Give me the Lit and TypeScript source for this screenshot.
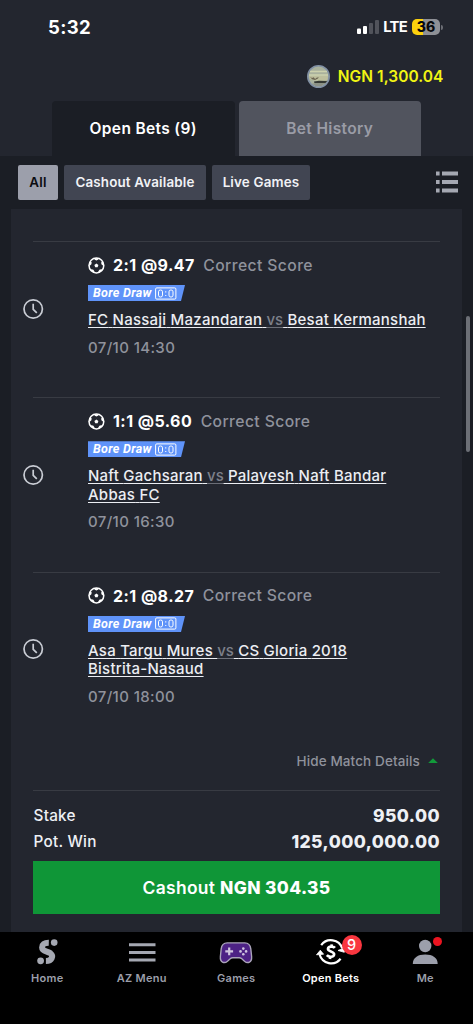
import { LitElement, html, css, svg } from 'lit';
import { customElement, property } from 'lit/decorators.js';

interface Bet {
  pick: string;
  home: string;
  away: string;
  date: string;
}

const BETS: Bet[] = [
  { pick: '2:1 @9.47', home: 'FC Nassaji Mazandaran', away: 'Besat Kermanshah', date: '07/10 14:30' },
  { pick: '1:1 @5.60', home: 'Naft Gachsaran', away: 'Palayesh Naft Bandar Abbas FC', date: '07/10 16:30' },
  { pick: '2:1 @8.27', home: 'Asa Targu Mures', away: 'CS Gloria 2018 Bistrita-Nasaud', date: '07/10 18:00' },
];

const seams = [0, 72, 144, 216, 288];

// Hyphenated club names stay on one line.
const words = (name: string) =>
  name.split(' ').map((w, i) => html`${i ? ' ' : ''}${w.includes('-') ? html`<span class="word">${w}</span>` : w}`);

@customElement('bet-item')
export class BetItem extends LitElement {
  @property({ attribute: false }) bet!: Bet;

  static styles = css`
    :host { display: flex; border-top: 1px solid #383b43; }
    .clock { display: flex; align-items: center; width: 55px; padding-bottom: 21px; box-sizing: border-box; }
    .clock svg { display: block; margin-left: -11px; }
    .body { flex: 1; min-width: 0; padding: 11px 0 39.7px; }
    .title { display: flex; align-items: center; height: 24px; white-space: nowrap; }
    .ball { display: block; margin-right: 8px; }
    .pick { font-size: 16px; font-weight: 750; color: #fff; letter-spacing: 0.45px; }
    .market { font-size: 15.7px; font-weight: 500; color: #8f929c; margin-left: 8.5px; letter-spacing: 0.4px; }
    .tag {
      display: flex; align-items: center; width: 97px; height: 16px; margin-top: 8px; padding-left: 5px;
      box-sizing: border-box; background: #5f93f9; color: #fff; letter-spacing: 0.3px;
      clip-path: polygon(0 0, 100% 0, calc(100% - 4px) 100%, 0 100%);
      font: italic 700 12.5px/16px Roboto, sans-serif;
    }
    .tag svg { display: block; margin-left: 3px; }
    .teams {
      margin-top: 10px; max-width: 340px; font-size: 15px; line-height: 18.5px; font-weight: 500; color: #eceef3;
      text-decoration: underline; text-decoration-thickness: 1.3px; text-underline-offset: 1.8px;
      text-decoration-skip-ink: none; letter-spacing: 0.24px;
    }
    .word { white-space: nowrap; }
    .vs {
      color: #7d808a; letter-spacing: 0; text-decoration: underline #6b6e77; text-decoration-thickness: 1.3px;
      text-underline-offset: 1.8px; text-decoration-skip-ink: none;
    }
    .date { margin-top: 8px; font-size: 15px; line-height: 20px; font-weight: 500; color: #8f929c; letter-spacing: 0.37px; }
  `;

  render() {
    const b = this.bet;
    return html`
      <div class="clock">
        <svg width="22" height="22" viewBox="0 0 22 22" fill="none" stroke="#c9ccd4" stroke-width="1.7">
          <circle cx="11.2" cy="11" r="9.2" />
          <path d="M11.2 5.8V11.3L14.8 14.9" />
        </svg>
      </div>
      <div class="body">
        <div class="title">
          <svg class="ball" width="17" height="17" viewBox="0 0 17 17">
            <circle cx="8.4" cy="8.5" r="7.4" fill="none" stroke="#fff" stroke-width="1.5" />
            <path d="M8.4 6.4L10.4 7.9L9.6 10.2H7.2L6.4 7.9Z" fill="#fff" />
            ${seams.map((a) => svg`<path transform="rotate(${a} 8.4 8.5)" d="M5.8 1.2H11L10 2.7L8.4 3.4L6.8 2.7Z" fill="#fff" />`)}
          </svg>
          <span class="pick">${b.pick}</span><span class="market">Correct Score</span>
        </div>
        <div class="tag">Bore Draw
          <svg width="22" height="13" viewBox="0 0 22 13">
            <rect x="0.6" y="0.9" width="20.3" height="11.2" rx="1.2" fill="none" stroke="#fff" />
            <g fill="none" stroke="#fff">
              <rect x="3.5" y="3" width="4" height="7" rx="1.8" />
              <rect x="14" y="3" width="4" height="7" rx="1.8" />
            </g>
            <path d="M10.2 4.3h1.1v1.1h-1.1zM10.2 8h1.1v1.1h-1.1z" fill="#fff" />
          </svg>
        </div>
        <div class="teams">${words(b.home)} <span class="vs">vs</span> ${words(b.away)}</div>
        <div class="date">${b.date}</div>
      </div>
    `;
  }
}

@customElement('app-root')
export class AppRoot extends LitElement {
  static styles = css`
    :host {
      display: flex; flex-direction: column; position: relative; width: 473px; height: 1024px; overflow: hidden;
      background: #1b1e25; color: #fff; font-family: Inter, sans-serif; box-sizing: border-box;
    }
    svg { display: block; flex: none; }
    header { background: #23262f; height: 156px; display: flex; flex-direction: column; flex: none; }
    .status { display: flex; align-items: center; justify-content: space-between; height: 54px; padding: 0 30px 0 48px; }
    .time { font-size: 18.5px; font-weight: 700; letter-spacing: 0.35px; }
    .signals { display: flex; align-items: center; }
    .lte { font-size: 14.8px; font-weight: 650; margin: 0 5px 0 4px; letter-spacing: -0.7px; }
    .battery {
      width: 28px; height: 16px; border-radius: 5px; display: flex; align-items: center; justify-content: center;
      background: linear-gradient(90deg, #fdd20d 0 10.5px, #8e9096 10.5px); color: #08090c;
      font-size: 14px; font-weight: 800; line-height: 16px;
    }
    .cap { width: 2px; height: 5px; margin-left: 1px; background: #6b6d74; border-radius: 0 2px 2px 0; }
    .balance { display: flex; align-items: center; justify-content: flex-end; height: 44px; padding-right: 29.5px; gap: 7.5px; }
    .amount { color: #f1f514; font-size: 15.5px; font-weight: 600; letter-spacing: 0.05px; }
    .tabs { display: flex; gap: 4px; padding-left: 52px; margin-top: 3px; }
    .tab {
      width: 182.5px; height: 55px; display: flex; align-items: center; justify-content: center;
      border-radius: 4px 4px 0 0; font-size: 15.5px; font-weight: 600; background: #1b1e25; letter-spacing: 0.35px;
    }
    .tab.off { background: #51545e; color: #9a9ca6; }
    .filters { display: flex; align-items: center; height: 53px; gap: 6px; padding: 0 15px 0 18px; flex: none; }
    .chip {
      height: 35px; border-radius: 2px; background: #414552; color: #f1f2f6; display: flex; align-items: center;
      justify-content: center; font-size: 13.4px; font-weight: 600; white-space: nowrap; letter-spacing: 0.17px;
      padding-bottom: 1px; box-sizing: border-box;
    }
    .chip.all { width: 40px; background: #9c9fab; color: #0c0d11; }
    .chip.cash { width: 142px; }
    .chip.live { width: 98px; }
    .list { margin: -2px 0 0 auto; }
    main { flex: 1; margin: 0 11px; padding: 32px 22px 0; background: #23262f; min-height: 0; }
    .hide {
      display: flex; align-items: center; justify-content: flex-end; height: 20px; margin: 4px 0 19px; padding-right: 2px;
      color: #8f929c; font-size: 13.5px; font-weight: 500; gap: 8px; letter-spacing: 0.12px;
    }
    .sum { border-top: 1px solid #383b43; padding-top: 12px; }
    .row {
      display: flex; align-items: center; justify-content: space-between; height: 26px; padding-left: 0.5px;
      font-size: 15.3px; font-weight: 500; color: #eef0f5; letter-spacing: 0.25px;
    }
    .row b { font-size: 17.5px; font-weight: 800; letter-spacing: 0.43px; }
    .cashout {
      display: flex; align-items: center; justify-content: center; height: 53px; margin-top: 6.5px; background: #0f9637;
      font-size: 17.4px; font-weight: 600; white-space: pre; letter-spacing: 0.35px;
    }
    .cashout b { font-weight: 800; }
    nav { display: grid; grid-template-columns: repeat(5, 94.5px); height: 92px; background: #000; flex: none; }
    .item {
      position: relative; display: flex; flex-direction: column; align-items: center; padding-top: 5px;
      font-size: 11px; font-weight: 600; color: #9c9fab; line-height: 14px; letter-spacing: 0.25px;
    }
    .item svg { margin-bottom: 4px; }
    .item.on { color: #fff; }
    .badge {
      position: absolute; left: 58px; top: 3px; width: 20px; height: 20px; border-radius: 50%; background: #f9363f;
      color: #fff; font-size: 14.5px; font-weight: 500; line-height: 20px; text-align: center; letter-spacing: 0;
    }
    .dot { position: absolute; left: 54.5px; top: 4.5px; width: 9px; height: 9px; border-radius: 50%; background: #eb1420; }
    .scroll { position: absolute; left: 466px; top: 316px; width: 4px; height: 136px; border-radius: 2px; background: #6c6f76; }
  `;

  render() {
    return html`
      <header>
        <div class="status">
          <span class="time">5:32</span>
          <div class="signals">
            <svg width="22" height="14" viewBox="0 0 22 14">
              <rect x="0" y="8.5" width="4" height="5.5" rx="1" fill="#fff" />
              <rect x="6" y="6" width="4" height="8" rx="1" fill="#fff" />
              <rect x="12" y="3" width="4" height="11" rx="1" fill="#51535b" />
              <rect x="18" y="0" width="4" height="14" rx="1" fill="#51535b" />
            </svg>
            <span class="lte">LTE</span>
            <span class="battery">36</span><span class="cap"></span>
          </div>
        </div>
        <div class="balance">
          <svg width="23" height="23" viewBox="0 0 23 23">
            <circle cx="11.5" cy="11.5" r="10.7" fill="#a9b19d" stroke="#8190a4" stroke-width="1.6" />
            <path d="M2 10.5H21L20.5 14.5L17.5 16.5L7 15.5L2.5 13.5Z" fill="#bdbf9d" />
            <path d="M3 6.5H20M2 10H21" stroke="#cdd2ae" stroke-width="1.4" />
            <path d="M3 11.8L5 13L6.8 12.2L8 14L10 12.4L12 12.4L10.5 13.8L8 15L5 14.2Z" fill="#6b6350" />
            <path d="M7 16.4L12 15.8L20.2 16.1L18.3 18.2H7.5Z" fill="#343833" />
            <path d="M5 18.6H18L14.5 21H8.5Z" fill="#8c9187" />
          </svg>
          <span class="amount">NGN 1,300.04</span>
        </div>
        <div class="tabs">
          <div class="tab">Open Bets (9)</div>
          <div class="tab off">Bet History</div>
        </div>
      </header>
      <div class="filters">
        <div class="chip all">All</div>
        <div class="chip cash">Cashout Available</div>
        <div class="chip live">Live Games</div>
        <svg class="list" width="22" height="22" viewBox="0 0 22 22" fill="#a5a8b2">
          <path d="M0 0.5h3.6v4H0zM6 0.5h16v4H6zM0 9h3.6v4H0zM6 9h16v4H6zM0 17.5h3.6v4H0zM6 17.5h16v4H6z" />
        </svg>
      </div>
      <main>
        ${BETS.map((b) => html`<bet-item .bet=${b}></bet-item>`)}
        <div class="hide">
          Hide Match Details
          <svg width="10" height="5" viewBox="0 0 10 5"><path d="M0.2 5L5 0.3L9.8 5Z" fill="#129a3a" /></svg>
        </div>
        <div class="sum">
          <div class="row"><span>Stake</span><b>950.00</b></div>
          <div class="row"><span>Pot. Win</span><b>125,000,000.00</b></div>
        </div>
        <div class="cashout">Cashout <b>NGN 304.35</b></div>
      </main>
      <nav>
        <div class="item">
          <svg width="30" height="30" viewBox="0 0 30 30" fill="#a5a8b2">
            <path d="M16.8 5.7C12.4 5.6 10.1 7.6 10.1 10.4C10.1 14.6 15.6 14 18.4 16.2C21.8 19 20 24 13.9 24" fill="none" stroke="#a5a8b2" stroke-width="6" />
            <circle cx="22.2" cy="5.6" r="3.3" /><circle cx="8.6" cy="23.8" r="3.4" />
          </svg>Home
        </div>
        <div class="item">
          <svg width="30" height="30" viewBox="0 0 30 30" fill="#a5a8b2">
            <path d="M2 6.3h26.5v3H2zM2 14h26.5v3H2zM2 21.6h26.5v3H2z" />
          </svg>AZ Menu
        </div>
        <div class="item">
          <svg width="34" height="30" viewBox="0 0 34 30">
            <path d="M8.2 5.9H25.8C29.5 5.9 31.3 8.1 31.8 11.8L32.6 19.5C33.1 25.3 28.8 27 25.5 24.2L22.5 21.5C21.8 20.9 21.2 20.7 20.3 20.7H13.7C12.8 20.7 12.2 20.9 11.5 21.5L8.5 24.2C5.2 27 0.9 25.3 1.4 19.5L2.2 11.8C2.7 8.1 4.5 5.9 8.2 5.9Z" fill="#4d2285" stroke="#aaa4ba" stroke-width="1.4" />
            <path d="M10.2 10.5V18.3M6.3 14.4H14.1" stroke="#cfc5df" stroke-width="2.2" />
            <g fill="#cfc5df"><circle cx="24.3" cy="11.6" r="1.3" /><circle cx="24.3" cy="17.2" r="1.3" /><circle cx="21.5" cy="14.4" r="1.3" /><circle cx="27.1" cy="14.4" r="1.3" /></g>
          </svg>Games
        </div>
        <div class="item on">
          <svg width="30" height="30" viewBox="0 0 30 30" fill="none" stroke="#fff">
            <path d="M5.2 8.1A12 12 0 0 1 26.3 11.4" stroke-width="2.2" />
            <path d="M24.6 21.7A12 12 0 0 1 3.6 17.5" stroke-width="2.2" />
            <path d="M22 13.5L29.3 10.4L28.3 15.3Z" fill="#fff" stroke-width="0.8" />
            <path d="M0.5 17.8L4.3 13.2L7.6 17.2Z" fill="#fff" stroke-width="0.8" />
            <path d="M18.9 10.9C17.5 9.1 12.3 9 12 11.9C11.8 14.9 18.4 14 18.1 17.5C17.8 20.3 12.8 20.4 10.8 18.2M15.8 7.4L15.4 9.8M14.3 19.7L13.9 22" stroke-width="2.7" />
          </svg>Open Bets
          <span class="badge">9</span>
        </div>
        <div class="item">
          <svg width="30" height="30" viewBox="0 0 30 30" fill="#9c9fab">
            <circle cx="15.2" cy="9" r="6.2" />
            <path d="M2.8 27C2.8 20.8 7.8 17.6 15.2 17.6S27.7 20.8 27.7 27Z" />
          </svg>Me
          <span class="dot"></span>
        </div>
      </nav>
      <div class="scroll"></div>
    `;
  }
}
